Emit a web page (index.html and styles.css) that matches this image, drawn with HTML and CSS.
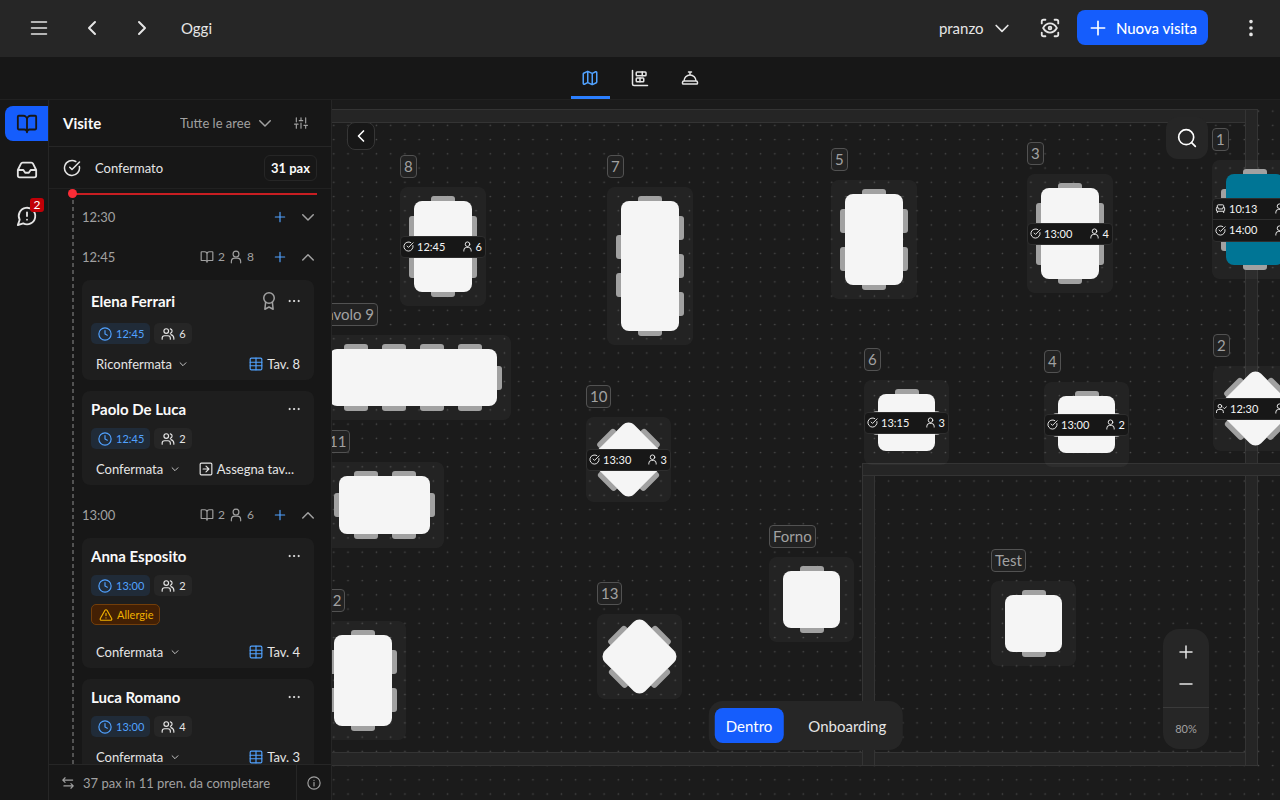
FILE: index.html
```html
<!DOCTYPE html>
<html lang="it">
<head>
    <meta charset="UTF-8">
    <meta name="viewport" content="width=device-width, initial-scale=1.0">
    <title>Visite</title>
    <link rel="stylesheet" href="styles.css">
</head>
<body>
    <!-- Icone -->
    <svg class="sprite" aria-hidden="true">
        <symbol id="i-menu" viewBox="0 0 24 24"><path d="M2 4h20M2 12h20M2 20h20"/></symbol>
        <symbol id="i-left" viewBox="0 0 24 24"><path d="m15 18-6-6 6-6"/></symbol>
        <symbol id="i-right" viewBox="0 0 24 24"><path d="m9 18 6-6-6-6"/></symbol>
        <symbol id="i-down" viewBox="0 0 24 24"><path d="m5 9 7 7 7-7"/></symbol>
        <symbol id="i-up" viewBox="0 0 24 24"><path d="m5 16 7-7 7 7"/></symbol>
        <symbol id="i-plus" viewBox="0 0 24 24"><path d="M4 12h16M12 4v16"/></symbol>
        <symbol id="i-minus" viewBox="0 0 24 24"><path d="M4 12h16"/></symbol>
        <symbol id="i-scan" viewBox="0 0 24 24"><path d="M3 7V5a2 2 0 0 1 2-2h2M17 3h2a2 2 0 0 1 2 2v2M21 17v2a2 2 0 0 1-2 2h-2M7 21H5a2 2 0 0 1-2-2v-2M4.500 12c2-3.500 4.500-5 7.500-5s5.500 1.500 7.500 5c-2 3.500-4.500 5-7.500 5s-5.500-1.500-7.500-5"/><circle cx="12" cy="12" r="1.500"/></symbol>
        <symbol id="i-more-v" viewBox="0 0 24 24"><circle cx="12" cy="5" r="1"/><circle cx="12" cy="12" r="1"/><circle cx="12" cy="19" r="1"/></symbol>
        <symbol id="i-more" viewBox="0 0 24 24"><circle cx="3" cy="12" r="1.200"/><circle cx="12" cy="12" r="1.200"/><circle cx="21" cy="12" r="1.200"/></symbol>
        <symbol id="i-map" viewBox="0 0 24 24"><path d="M14.100 5.550a2 2 0 0 0 1.800 0l3.650-1.830A1 1 0 0 1 21 4.620v12.760a1 1 0 0 1-.550.900l-4.550 2.270a2 2 0 0 1-1.800 0l-4.200-2.100a2 2 0 0 0-1.800 0l-3.650 1.830A1 1 0 0 1 3 19.380V6.620a1 1 0 0 1 .550-.900l4.550-2.270a2 2 0 0 1 1.800 0zM15 5.760v15M9 3.240v15"/></symbol>
        <symbol id="i-gantt" viewBox="0 0 24 24"><path d="M2 2v18a2 2 0 0 0 2 2h18"/><rect x="7" y="4" width="13" height="5" rx="1"/><rect x="7" y="12" width="10" height="5" rx="1"/><path d="M15 4v5M12 12v5"/></symbol>
        <symbol id="i-bell" viewBox="0 0 24 24"><path d="M3 20a1 1 0 0 1-1-1v-1a2 2 0 0 1 2-2h16a2 2 0 0 1 2 2v1a1 1 0 0 1-1 1ZM20 16a8 8 0 1 0-16 0M12 4v4M10 4h4"/></symbol>
        <symbol id="i-book" viewBox="0 0 24 24"><path d="M12 7v14M3 18a1 1 0 0 1-1-1V4a1 1 0 0 1 1-1h5a4 4 0 0 1 4 4 4 4 0 0 1 4-4h5a1 1 0 0 1 1 1v13a1 1 0 0 1-1 1h-6a3 3 0 0 0-3 3 3 3 0 0 0-3-3z"/></symbol>
        <symbol id="i-inbox" viewBox="0 0 24 24"><path d="M22 12h-6l-2 3h-4l-2-3H2M5.450 5.110 2 12v6a2 2 0 0 0 2 2h16a2 2 0 0 0 2-2v-6l-3.450-6.890A2 2 0 0 0 16.760 4H7.240a2 2 0 0 0-1.790 1.110z"/></symbol>
        <symbol id="i-alert" viewBox="0 0 24 24"><path d="M7.900 20A9 9 0 1 0 4 16.100L2 22ZM12 8v4M12 16h.010"/></symbol>
        <symbol id="i-sliders" viewBox="0 0 24 24"><path d="M4 21v-7M4 10V3M12 21v-9M12 8V3M20 21v-5M20 12V3M1 14h6M9 8h6M17 16h6"/></symbol>
        <symbol id="i-check" viewBox="0 0 24 24"><path d="M21.800 10A10 10 0 1 1 17 3.340M9 11l3 3L22 4"/></symbol>
        <symbol id="i-user" viewBox="0 0 24 24"><circle cx="12" cy="7" r="5"/><path d="M4 22v-2a6 6 0 0 1 6-6h4a6 6 0 0 1 6 6v2"/></symbol>
        <symbol id="i-users" viewBox="0 0 24 24"><path d="M16 21v-2a4 4 0 0 0-4-4H6a4 4 0 0 0-4 4v2M22 21v-2a7 7 0 0 0-5-6M16 3.130a4 4 0 0 1 0 7.750"/><circle cx="9" cy="7" r="4"/></symbol>
        <symbol id="i-user-check" viewBox="0 0 24 24"><path d="M1 21v-2a5 5 0 0 1 5-5h5a5 5 0 0 1 5 5v2M16 10l2.500 2.500L23 8"/><circle cx="8.500" cy="7" r="4"/></symbol>
        <symbol id="i-sofa" viewBox="0 0 24 24"><path d="M19 9V6a2 2 0 0 0-2-2H7a2 2 0 0 0-2 2v3M3 16a2 2 0 0 0 2 2h14a2 2 0 0 0 2-2v-5a2 2 0 0 0-4 0v2H7v-2a2 2 0 0 0-4 0zM5 18v3M19 18v3"/></symbol>
        <symbol id="i-award" viewBox="0 0 24 24"><circle cx="12" cy="8" r="7"/><path d="M7.500 13.500 6.500 23l5.500-3 5.500 3-1-9.500"/></symbol>
        <symbol id="i-clock" viewBox="0 0 24 24"><circle cx="12" cy="12" r="10.500"/><path d="M12 6v6l4 2"/></symbol>
        <symbol id="i-table" viewBox="0 0 24 24"><rect x="2" y="2" width="20" height="20" rx="2"/><path d="M12 2v20M2 9h20M2 15h20"/></symbol>
        <symbol id="i-assign" viewBox="0 0 24 24"><rect x="2" y="2" width="20" height="20" rx="2"/><path d="M7 12h10M12 17l5-5-5-5"/></symbol>
        <symbol id="i-warn" viewBox="0 0 24 24"><path d="m21.730 18-8-14a2 2 0 0 0-3.480 0l-8 14A2 2 0 0 0 4 21h16a2 2 0 0 0 1.730-3M12 9v4M12 17h.010"/></symbol>
        <symbol id="i-swap" viewBox="0 0 24 24"><path d="M7 3 3 7l4 4M3 7h17M17 13l4 4-4 4M21 17H5"/></symbol>
        <symbol id="i-info" viewBox="0 0 24 24"><circle cx="12" cy="12" r="10.500"/><path d="M12 17v-6M12 7.500h.010"/></symbol>
        <symbol id="i-search" viewBox="0 0 24 24"><circle cx="11" cy="11" r="9"/><path d="m22 22-4.500-4.500"/></symbol>
    </svg>

    <header class="topbar">
        <button class="icon-btn" aria-label="Menu"><svg class="icon s18"><use href="#i-menu"/></svg></button>
        <button class="icon-btn nav-prev" aria-label="Giorno precedente"><svg class="icon s24"><use href="#i-left"/></svg></button>
        <button class="icon-btn nav-next" aria-label="Giorno successivo"><svg class="icon s24"><use href="#i-right"/></svg></button>
        <button class="today">Oggi</button>
        <div class="topbar-right">
            <label class="picker shift">
                <select aria-label="Turno"><option>pranzo</option></select>
                <svg class="icon s20"><use href="#i-down"/></svg>
            </label>
            <button class="icon-btn scan" aria-label="Vista"><svg class="icon s22"><use href="#i-scan"/></svg></button>
            <button class="new-visit"><svg class="icon s20"><use href="#i-plus"/></svg>Nuova visita</button>
            <button class="icon-btn more" aria-label="Altro"><svg class="icon s22 solid"><use href="#i-more-v"/></svg></button>
        </div>
    </header>

    <nav class="tabs">
        <button class="tab active" aria-label="Mappa"><svg class="icon s18"><use href="#i-map"/></svg></button>
        <button class="tab" aria-label="Timeline"><svg class="icon s18"><use href="#i-gantt"/></svg></button>
        <button class="tab" aria-label="Servizio"><svg class="icon s18"><use href="#i-bell"/></svg></button>
    </nav>

    <main class="workspace">
        <nav class="rail">
            <button class="rail-btn active" aria-label="Visite"><svg class="icon s22"><use href="#i-book"/></svg></button>
            <button class="rail-btn" aria-label="Richieste"><svg class="icon s22"><use href="#i-inbox"/></svg></button>
            <button class="rail-btn" aria-label="Avvisi"><svg class="icon s22"><use href="#i-alert"/></svg><span class="count">2</span></button>
        </nav>

        <aside class="panel">
            <div class="panel-head">
                <h2>Visite</h2>
                <label class="picker area">
                    <select aria-label="Area"><option>Tutte le aree</option></select>
                    <svg class="icon s18"><use href="#i-down"/></svg>
                </label>
                <button class="icon-btn filters" aria-label="Filtri"><svg class="icon s14"><use href="#i-sliders"/></svg></button>
            </div>
            <div class="status-row">
                <svg class="icon s18"><use href="#i-check"/></svg>
                <span>Confermato</span>
                <strong>31 pax</strong>
            </div>

            <div class="visits">
                <div class="now-line"></div>
                <div class="slot">
                    <span class="slot-time">12:30</span>
                    <button class="icon-btn add" aria-label="Aggiungi"><svg class="icon s14"><use href="#i-plus"/></svg></button>
                    <button class="icon-btn" aria-label="Apri"><svg class="icon s18"><use href="#i-down"/></svg></button>
                </div>
                <div class="slot">
                    <span class="slot-time">12:45</span>
                    <span class="slot-info"><svg class="icon s14"><use href="#i-book"/></svg>2<svg class="icon s14"><use href="#i-user"/></svg>8</span>
                    <button class="icon-btn add" aria-label="Aggiungi"><svg class="icon s14"><use href="#i-plus"/></svg></button>
                    <button class="icon-btn" aria-label="Chiudi"><svg class="icon s18"><use href="#i-up"/></svg></button>
                </div>
                <div class="cards">
                    <article class="card vip">
                        <div class="card-head">
                            <h3>Elena Ferrari</h3>
                            <svg class="icon s18 award"><use href="#i-award"/></svg>
                            <button class="icon-btn" aria-label="Opzioni"><svg class="icon s12 solid"><use href="#i-more"/></svg></button>
                        </div>
                        <div class="chips">
                            <span class="chip time"><svg class="icon s14"><use href="#i-clock"/></svg>12:45</span>
                            <span class="chip"><svg class="icon s14"><use href="#i-users"/></svg>6</span>
                        </div>
                        <div class="card-foot">
                            <label class="picker"><select aria-label="Stato"><option>Riconfermata</option></select><svg class="icon s10"><use href="#i-down"/></svg></label>
                            <button class="seat"><svg class="icon s14 blue"><use href="#i-table"/></svg>Tav. 8</button>
                        </div>
                    </article>
                    <article class="card">
                        <div class="card-head">
                            <h3>Paolo De Luca</h3>
                            <button class="icon-btn" aria-label="Opzioni"><svg class="icon s12 solid"><use href="#i-more"/></svg></button>
                        </div>
                        <div class="chips">
                            <span class="chip time"><svg class="icon s14"><use href="#i-clock"/></svg>12:45</span>
                            <span class="chip"><svg class="icon s14"><use href="#i-users"/></svg>2</span>
                        </div>
                        <div class="card-foot">
                            <label class="picker"><select aria-label="Stato"><option>Confermata</option></select><svg class="icon s10"><use href="#i-down"/></svg></label>
                            <button class="seat assign"><svg class="icon s14"><use href="#i-assign"/></svg>Assegna tav...</button>
                        </div>
                    </article>
                </div>
                <div class="slot">
                    <span class="slot-time">13:00</span>
                    <span class="slot-info"><svg class="icon s14"><use href="#i-book"/></svg>2<svg class="icon s14"><use href="#i-user"/></svg>6</span>
                    <button class="icon-btn add" aria-label="Aggiungi"><svg class="icon s14"><use href="#i-plus"/></svg></button>
                    <button class="icon-btn" aria-label="Chiudi"><svg class="icon s18"><use href="#i-up"/></svg></button>
                </div>
                <div class="cards">
                    <article class="card">
                        <div class="card-head">
                            <h3>Anna Esposito</h3>
                            <button class="icon-btn" aria-label="Opzioni"><svg class="icon s12 solid"><use href="#i-more"/></svg></button>
                        </div>
                        <div class="chips">
                            <span class="chip time"><svg class="icon s14"><use href="#i-clock"/></svg>13:00</span>
                            <span class="chip"><svg class="icon s14"><use href="#i-users"/></svg>2</span>
                        </div>
                        <div class="notes">
                            <span class="chip allergy"><svg class="icon s14"><use href="#i-warn"/></svg>Allergie</span>
                        </div>
                        <div class="card-foot">
                            <label class="picker"><select aria-label="Stato"><option>Confermata</option></select><svg class="icon s10"><use href="#i-down"/></svg></label>
                            <button class="seat"><svg class="icon s14 blue"><use href="#i-table"/></svg>Tav. 4</button>
                        </div>
                    </article>
                    <article class="card">
                        <div class="card-head">
                            <h3>Luca Romano</h3>
                            <button class="icon-btn" aria-label="Opzioni"><svg class="icon s12 solid"><use href="#i-more"/></svg></button>
                        </div>
                        <div class="chips">
                            <span class="chip time"><svg class="icon s14"><use href="#i-clock"/></svg>13:00</span>
                            <span class="chip"><svg class="icon s14"><use href="#i-users"/></svg>4</span>
                        </div>
                        <div class="card-foot">
                            <label class="picker"><select aria-label="Stato"><option>Confermata</option></select><svg class="icon s10"><use href="#i-down"/></svg></label>
                            <button class="seat"><svg class="icon s14 blue"><use href="#i-table"/></svg>Tav. 3</button>
                        </div>
                    </article>
                </div>
            </div>

            <footer class="panel-foot">
                <svg class="icon s14"><use href="#i-swap"/></svg>
                <span>37 pax in 11 pren. da completare</span>
                <button class="icon-btn" aria-label="Informazioni"><svg class="icon s14"><use href="#i-info"/></svg></button>
            </footer>
        </aside>

        <section class="floor">
            <svg class="dots" aria-hidden="true">
                <defs>
                    <pattern id="grid" x="-5.300" y="18.200" width="14.227" height="14.227" patternUnits="userSpaceOnUse">
                        <circle cx="7.100" cy="7.100" r="0.800" fill="#4c4c4c"/>
                    </pattern>
                </defs>
                <rect width="100%" height="100%" fill="url(#grid)"/>
            </svg>
            <div class="wall wall-top"></div>
            <div class="wall wall-bottom"></div>
            <div class="wall wall-right"></div>
            <div class="wall wall-inner"></div>
            <div class="wall wall-room"></div>
            <div id="tables"></div>

            <button class="collapse" aria-label="Nascondi pannello"><svg class="icon s20"><use href="#i-left"/></svg></button>
            <button class="search" aria-label="Cerca"><svg class="icon s20"><use href="#i-search"/></svg></button>
            <div class="areas">
                <button class="active">Dentro</button>
                <button>Onboarding</button>
            </div>
            <div class="zoom">
                <button aria-label="Ingrandisci"><svg class="icon s18"><use href="#i-plus"/></svg></button>
                <button aria-label="Riduci"><svg class="icon s18"><use href="#i-minus"/></svg></button>
                <output>80%</output>
            </div>
        </section>
    </main>

    <script src="tables.js"></script>
</body>
</html>
```

FILE: styles.css
```css
* {
    box-sizing: border-box;
}

body {
    margin: 0;
    height: 100vh;
    display: flex;
    flex-direction: column;
    overflow: hidden;
    background-color: #171717;
    color: #e5e5e5;
    font-family: "Lato", sans-serif;
    font-size: 13px;
    line-height: 20px;
}

h2, h3 {
    margin: 0;
    color: #fafafa;
    font-size: 15px;
    font-weight: 700;
    line-height: 20px;
}

button, select {
    margin: 0;
    padding: 0;
    border: none;
    background: none;
    color: inherit;
    font: inherit;
    cursor: pointer;
}

select {
    appearance: none;
}

.sprite {
    display: none;
}

.icon {
    display: block;
    flex: none;
    fill: none;
    stroke: currentColor;
    stroke-width: 2;
    stroke-linecap: round;
    stroke-linejoin: round;
}

.solid { fill: currentColor; }
.blue { color: #51a2ff; }
.s10 { width: 10px; height: 10px; }
.s12 { width: 12px; height: 12px; }
.s14 { width: 14px; height: 14px; }
.s18 { width: 18px; height: 18px; }
.s20 { width: 20px; height: 20px; }
.s22 { width: 22px; height: 22px; }
.s24 { width: 24px; height: 24px; }

.icon-btn {
    display: flex;
    align-items: center;
    justify-content: center;
}

.picker {
    display: flex;
    align-items: center;
    gap: 6px;
}

/* Barra superiore */
.topbar {
    display: flex;
    align-items: center;
    height: 57px;
    flex: none;
    padding: 0 18px 2px 30px;
    background-color: #262626;
    font-size: 15px;
}

.nav-prev {
    margin-left: 32px;
}

.nav-next {
    margin-left: 26px;
}

.today {
    margin-left: 27px;
}

.topbar-right {
    display: flex;
    align-items: center;
    margin-left: auto;
}

.shift {
    gap: 8px;
}

.scan {
    margin: 0 16px 0 27px;
}

.new-visit {
    display: flex;
    align-items: center;
    gap: 8px;
    height: 35px;
    padding: 0 11px;
    border-radius: 8px;
    background-color: #155dfc;
    color: #fff;
    font-weight: 500;
}

.more {
    margin-left: 32px;
}

/* Schede */
.tabs {
    display: flex;
    justify-content: center;
    gap: 11px;
    height: 43px;
    flex: none;
    border-bottom: 1px solid #212121;
}

.tab {
    display: flex;
    align-items: center;
    justify-content: center;
    width: 39px;
    border-top: 3px solid transparent;
    border-bottom: 3px solid transparent;
}

.tab.active {
    border-bottom-color: #2b7fff;
    color: #51a2ff;
}

.workspace {
    display: flex;
    flex: 1;
    min-height: 0;
}

/* Colonna laterale */
.rail {
    display: flex;
    flex-direction: column;
    gap: 11px;
    width: 49px;
    flex: none;
    padding: 6px 0 0 5px;
    border-right: 1px solid #262626;
}

.rail-btn {
    position: relative;
    display: flex;
    align-items: center;
    justify-content: center;
    height: 35px;
    border-radius: 8px 0 0 8px;
}

.rail-btn.active {
    background-color: #155dfc;
    color: #171717;
}

.count {
    position: absolute;
    top: 0;
    right: 4px;
    width: 14px;
    height: 14px;
    border-radius: 3px;
    background-color: #c10007;
    color: #fff;
    font-size: 12px;
    line-height: 14px;
}

/* Pannello visite */
.panel {
    display: flex;
    flex-direction: column;
    width: 283px;
    flex: none;
    border-right: 1px solid #262626;
}

.panel-head {
    display: flex;
    align-items: center;
    height: 47px;
    flex: none;
    padding: 0 23px 0 14px;
    border-bottom: 1px solid #262626;
}

.area {
    gap: 5px;
    margin-left: auto;
    color: #a1a1a1;
}

.filters {
    margin-left: 20px;
    color: #a1a1a1;
}

.status-row {
    display: flex;
    align-items: center;
    gap: 14px;
    height: 42px;
    flex: none;
    padding: 0 14px;
    border-bottom: 1px solid #212121;
}

.status-row strong {
    margin-left: auto;
    padding: 2px 6px;
    border: 1px solid #262626;
    border-radius: 6px;
    color: #fafafa;
}

.visits {
    position: relative;
    flex: 1;
    min-height: 0;
    overflow: hidden;
    padding: 8px 17px 0 33px;
}

.visits::before {
    content: "";
    position: absolute;
    left: 23px;
    top: 4px;
    bottom: 0;
    width: 2px;
    background: repeating-linear-gradient(#525252 0 4px, transparent 4px 7px);
}

.now-line {
    position: absolute;
    left: 24px;
    right: 14px;
    top: 4px;
    height: 2px;
    background-color: #c81e22;
}

.now-line::before {
    content: "";
    position: absolute;
    left: -5px;
    top: -4px;
    width: 9px;
    height: 9px;
    border-radius: 50%;
    background-color: #fb2c36;
}

.slot {
    display: flex;
    align-items: center;
    gap: 12px;
    height: 40px;
    margin-right: -3px;
    color: #a1a1a1;
}

.slot-time {
    margin-right: auto;
}

.slot-info {
    display: flex;
    align-items: center;
    gap: 4px;
    margin-right: 7px;
    font-size: 12px;
}

.add {
    color: #51a2ff;
}

.cards {
    display: flex;
    flex-direction: column;
    gap: 11px;
    padding: 3px 0 10px;
}

.card {
    padding: 8px 9px 6px;
    border-radius: 8px;
    background-color: #1e1e1e;
}

.card-head {
    display: flex;
    align-items: center;
    gap: 10px;
    padding-right: 5px;
}

.vip .card-head {
    height: 26px;
}

.card-head h3 {
    margin-right: auto;
}

.award {
    color: #a1a1a1;
}

.chips, .notes {
    display: flex;
    gap: 4px;
    margin-top: 9px;
}

.notes {
    margin-top: 8px;
    padding-bottom: 7px;
}

.chip {
    display: flex;
    align-items: center;
    gap: 4px;
    height: 21px;
    padding: 0 6px 0 7px;
    border-radius: 5px;
    background-color: #262626;
    font-size: 11px;
}

.chip.time {
    background-color: #202b38;
    color: #51a2ff;
}

.chip.allergy {
    border: 1px solid #733e0a;
    background-color: #432004;
    color: #f0b100;
}

.card-foot {
    display: flex;
    align-items: center;
    justify-content: space-between;
    margin-top: 10px;
    padding: 0 5px;
}

.seat {
    display: flex;
    align-items: center;
    gap: 4px;
}

.seat.assign {
    padding-right: 6px;
}

.panel-foot {
    display: flex;
    align-items: center;
    height: 36px;
    flex: none;
    gap: 8px;
    padding-left: 12px;
    border-top: 1px solid #262626;
    color: #a1a1a1;
}

.panel-foot button {
    align-self: stretch;
    width: 35px;
    margin-left: auto;
    border-left: 1px solid #262626;
}

/* Mappa della sala */
.floor {
    position: relative;
    flex: 1;
    min-width: 0;
    overflow: hidden;
    background-color: #1b1b1b;
}

.dots {
    position: absolute;
    inset: 0;
    width: 100%;
    height: 100%;
}

.wall {
    position: absolute;
    border: 1px solid #343434;
    background-color: #252525;
}

.wall-top { left: -20px; top: 9px; width: 946px; height: 14px; }
.wall-bottom { left: -20px; top: 652px; width: 946px; height: 14px; }
.wall-right { left: 913px; top: 9px; width: 13px; height: 657px; }
.wall-inner { left: 530px; top: 363px; width: 13px; height: 303px; }
.wall-room { left: 530px; top: 363px; width: 440px; height: 13px; }

.table {
    position: absolute;
}

.table-name {
    position: absolute;
    left: 0;
    bottom: 100%;
    margin-bottom: 9px;
    padding: 0 3px;
    border: 1px solid #525252;
    border-radius: 4px;
    background-color: #222;
    color: #a1a1a1;
    font-size: 15px;
    line-height: 21px;
    white-space: nowrap;
}

.plate {
    padding: 9px;
    border-radius: 8px;
    background-color: rgba(255, 255, 255, 0.04);
}

.seats {
    display: grid;
    grid-template-columns: 5px auto 5px;
    grid-template-rows: 5px auto 5px;
}

.rotated {
    transform: rotate(45deg);
}

.side {
    display: flex;
    align-items: center;
    justify-content: center;
    gap: 14px;
}

.side-top { grid-area: 1 / 2; }
.side-left { grid-area: 2 / 1; flex-direction: column; }
.side-right { grid-area: 2 / 3; flex-direction: column; }
.side-bottom { grid-area: 3 / 2; }

.chair {
    background-color: #a1a1a1;
}

.side-top .chair, .side-bottom .chair { width: 24px; height: 5px; }
.side-left .chair, .side-right .chair { width: 5px; height: 24px; }
.side-top .chair { border-radius: 3px 3px 0 0; }
.side-bottom .chair { border-radius: 0 0 3px 3px; }
.side-left .chair { border-radius: 3px 0 0 3px; }
.side-right .chair { border-radius: 0 3px 3px 0; }

.surface {
    grid-area: 2 / 2;
    border-radius: 8px;
    background-color: #f5f5f5;
}

.surface.busy {
    background-color: #007595;
}

.bookings {
    position: absolute;
    left: 0;
    right: 0;
    top: 50%;
    transform: translateY(-50%);
    border: 1px solid #2e2e2e;
    border-radius: 4px;
    background-color: #171717;
}

.booking {
    display: flex;
    align-items: center;
    gap: 3px;
    height: 20px;
    padding: 0 3px 0 2px;
    color: #f5f5f5;
    font-size: 11px;
}

.booking + .booking {
    height: 22px;
    border-top: 1px solid #2e2e2e;
}

.booking time {
    margin-right: auto;
}

.booking .icon {
    width: 11px;
    height: 11px;
}

/* Comandi sopra la mappa */
.collapse, .search, .areas, .zoom {
    position: absolute;
    display: flex;
    align-items: center;
    justify-content: center;
}

.collapse {
    left: 15px;
    top: 22px;
    width: 28px;
    height: 28px;
    border: 1px solid #363636;
    border-radius: 8px;
    background-color: #171717;
    color: #fff;
}

.search {
    right: 72px;
    top: 17px;
    width: 42px;
    height: 42px;
    border-radius: 12px;
    background-color: #262626;
    color: #fff;
}

.areas {
    left: 50%;
    bottom: 50px;
    transform: translateX(-50%);
    gap: 14px;
    padding: 7px 6px;
    border-radius: 14px;
    background-color: #262626;
    font-size: 15px;
}

.areas button {
    height: 35px;
    padding: 0 11px;
    border-radius: 8px;
}

.areas .active {
    background-color: #155dfc;
    color: #fff;
}

.zoom {
    right: 71px;
    bottom: 51px;
    width: 46px;
    padding-top: 7px;
    flex-direction: column;
    border-radius: 16px;
    background-color: #262626;
}

.zoom button {
    display: flex;
    align-items: center;
    justify-content: center;
    width: 100%;
    height: 32px;
}

.zoom output {
    width: 100%;
    margin-top: 7px;
    border-top: 1px solid #3a3a3a;
    color: #a1a1a1;
    font-size: 11px;
    line-height: 41px;
    text-align: center;
}
```

FILE: tables.js
```js
// chairs: [top, right, bottom, left]
const tables = [
    { name: '8', x: 68, y: 87, w: 58, h: 91, chairs: [1, 2, 1, 2], bookings: [['check', '12:45', 6]] },
    { name: '7', x: 275, y: 87, w: 58, h: 130, chairs: [1, 3, 1, 2] },
    { name: '5', x: 499, y: 80, w: 58, h: 91, chairs: [1, 2, 1, 2] },
    { name: '3', x: 695, y: 74, w: 58, h: 91, chairs: [1, 2, 1, 2], bookings: [['check', '13:00', 4]] },
    { name: '1', x: 880, y: 60, w: 58, h: 91, chairs: [1, 2, 1, 2], busy: true, bookings: [['sofa', '10:13', 4], ['check', '14:00', 4]] },
    { name: 'Tavolo 9', x: -17, y: 235, w: 168, h: 57, chairs: [4, 1, 4, 1] },
    { name: '10', x: 254, y: 317, w: 57, h: 57, chairs: [1, 1, 1, 1], rotated: true, bookings: [['check', '13:30', 3]] },
    { name: '11', x: -7, y: 362, w: 91, h: 58, chairs: [2, 1, 2, 1] },
    { name: '6', x: 532, y: 280, w: 57, h: 57, chairs: [1, 1, 0, 1], bookings: [['check', '13:15', 3]] },
    { name: '4', x: 712, y: 282, w: 57, h: 57, chairs: [1, 1, 0, 1], bookings: [['check', '13:00', 2]] },
    { name: '2', x: 881, y: 266, w: 57, h: 57, chairs: [1, 1, 1, 1], rotated: true, bookings: [['user-check', '12:30', 2]] },
    { name: '12', x: -12, y: 521, w: 58, h: 91, chairs: [1, 2, 1, 2] },
    { name: '13', x: 265, y: 514, w: 57, h: 57, chairs: [1, 1, 1, 1], rotated: true },
    { name: 'Forno', x: 437, y: 457, w: 57, h: 57, chairs: [1, 0, 1, 0] },
    { name: 'Test', x: 659, y: 481, w: 57, h: 57, chairs: [1, 0, 1, 0] }
];

const icon = id => `<svg class="icon"><use href="#i-${id}"/></svg>`;
const sides = ['top', 'right', 'bottom', 'left'];

document.getElementById('tables').innerHTML = tables.map(t => {
    const chairs = sides.map((side, i) =>
        `<div class="side side-${side}">${'<i class="chair"></i>'.repeat(t.chairs[i])}</div>`
    ).join('');
    const bookings = (t.bookings || []).map(b =>
        `<div class="booking">${icon(b[0])}<time>${b[1]}</time>${icon('user')}<span>${b[2]}</span></div>`
    ).join('');
    return `<div class="table" style="left:${t.x}px;top:${t.y}px">
        <span class="table-name">${t.name}</span>
        <div class="plate">
            <div class="seats${t.rotated ? ' rotated' : ''}">
                ${chairs}
                <div class="surface${t.busy ? ' busy' : ''}" style="width:${t.w}px;height:${t.h}px"></div>
            </div>
        </div>
        ${bookings ? `<div class="bookings">${bookings}</div>` : ''}
    </div>`;
}).join('');
```
